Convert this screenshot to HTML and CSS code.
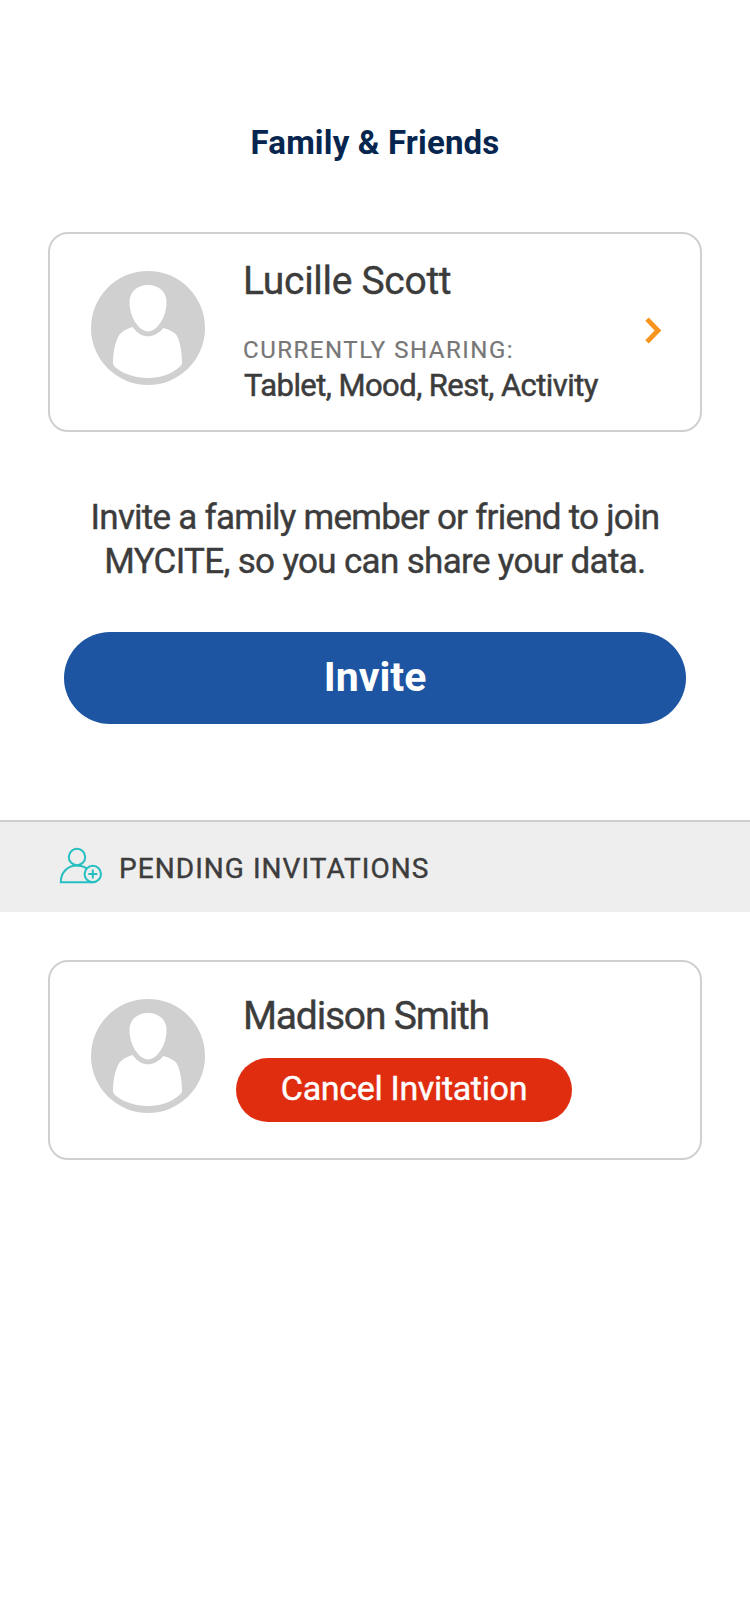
FILE: index.html
```
<!DOCTYPE html>
<html lang="en">
<head>
<meta charset="utf-8">
<title>Family &amp; Friends</title>
<link rel="stylesheet" href="styles.css">
</head>
<body>
<main class="screen">
  <h1 class="title">Family &amp; Friends</h1>

  <section class="card">
    <svg class="avatar" viewBox="0 0 114 114" aria-hidden="true">
      <circle cx="57" cy="57" r="57" fill="#d0d0d0"/>
      <path fill="#fff" d="M57 14C68 14 75.500 21 75.500 31C75.500 46 66 60.500 57 60.500C48 60.500 38.500 46 38.500 31C38.500 21 46 14 57 14Z"/>
      <path fill="#fff" d="M41.500 56C46 62 51 65.300 57 65.300C63 65.300 68 62 72.500 57C77 58 80.500 60 84 62.500C89 66.500 91 82 91 92Q91 94 89 95.500C80 103.500 69 107 57 107C45 107 33 103.500 24 96Q22 94 22 92C22 82 24 70 29 63C32 59.500 37 57.500 41.500 56Z"/>
    </svg>
    <div class="info">
      <h2 class="name name-lucille">Lucille Scott</h2>
      <p class="label">CURRENTLY SHARING:</p>
      <p class="shared">Tablet, Mood, Rest, Activity</p>
    </div>
    <svg class="chevron" viewBox="0 0 17 28" aria-hidden="true"><path d="M2 2.200L13 13.500L2 24.800" fill="none" stroke="#f7941d" stroke-width="4.800"/></svg>
  </section>

  <p class="prompt"><span class="prompt-first">Invite a family member or friend to join</span><br><span class="prompt-second">MYCITE, so you can share your data.</span></p>
  <button class="invite">Invite</button>

  <div class="section-bar">
    <svg class="person-add" viewBox="0 0 44 38" fill="none" stroke="#25bfc1" stroke-width="2" aria-hidden="true">
      <circle cx="18" cy="10" r="8.200"/>
      <path d="M34 35.200H1.800C1.800 25 9 18.600 18 18.600C21.500 18.600 25 19.500 28 21.300"/>
      <circle cx="33.800" cy="27" r="8.200"/>
      <path d="M33.800 22.500V31.500M29.300 27H38.300"/>
    </svg>
    <h2 class="section-title">PENDING INVITATIONS</h2>
  </div>

  <section class="card">
    <svg class="avatar" viewBox="0 0 114 114" aria-hidden="true">
      <circle cx="57" cy="57" r="57" fill="#d0d0d0"/>
      <path fill="#fff" d="M57 14C68 14 75.500 21 75.500 31C75.500 46 66 60.500 57 60.500C48 60.500 38.500 46 38.500 31C38.500 21 46 14 57 14Z"/>
      <path fill="#fff" d="M41.500 56C46 62 51 65.300 57 65.300C63 65.300 68 62 72.500 57C77 58 80.500 60 84 62.500C89 66.500 91 82 91 92Q91 94 89 95.500C80 103.500 69 107 57 107C45 107 33 103.500 24 96Q22 94 22 92C22 82 24 70 29 63C32 59.500 37 57.500 41.500 56Z"/>
    </svg>
    <div class="info info-pending">
      <h2 class="name name-madison">Madison Smith</h2>
      <button class="cancel">Cancel Invitation</button>
    </div>
  </section>
</main>
</body>
</html>
```
FILE: styles.css
```
* { box-sizing: border-box; margin: 0; }
body { background: #fff; color: #3c3c3c; font-family: Roboto, "Liberation Sans", sans-serif; }
.screen { display: flex; flex-direction: column; min-height: 1624px; padding-top: 121px; }
.title { color: #06264f; font-size: 33px; font-weight: 700; line-height: 44px; letter-spacing: .15px; text-align: center; }
.card { display: flex; height: 200px; margin: 0 48px; padding: 0 38px 0 41px; border: 2px solid #d0d0d0; border-radius: 20px; }
.title + .card { margin-top: 67px; }
.avatar { flex: none; width: 114px; height: 114px; margin-top: 37px; }
.info { flex: 1; padding: 25px 0 0 38px; white-space: nowrap; }
.name { font-size: 39px; font-weight: 400; line-height: 44px; -webkit-text-stroke: .4px; }
.name-lucille { letter-spacing: -.3px; }
.name-madison { letter-spacing: -1.2px; }
.label { margin: 33px 0 0; color: #777; font-size: 24px; line-height: 28px; letter-spacing: 1.52px; -webkit-text-stroke: .2px; }
.shared { margin: 4px 0 0 1px; font-size: 31px; line-height: 36px; letter-spacing: -.56px; -webkit-text-stroke: .5px; }
.chevron { flex: none; width: 17px; height: 28px; margin-top: 83px; }
.prompt { margin-top: 64px; font-size: 35px; line-height: 44px; text-align: center; -webkit-text-stroke: .4px; }
.prompt-first { letter-spacing: -.75px; }
.prompt-second { letter-spacing: -.67px; }
button { border: 0; color: #fff; font-family: inherit; }
.invite { height: 92px; margin: 48px 64px 0; padding: 0 0 3px; border-radius: 46px; background: #1e55a3; font-size: 41px; font-weight: 700; }
.section-bar { display: flex; align-items: center; gap: 16px; height: 92px; margin: 96px 0 48px; padding-left: 59px; border-top: 2px solid #cfcfcf; background: #eee; }
.person-add { width: 44px; height: 38px; margin-top: -2px; }
.section-title { padding-top: 3px; font-size: 28px; font-weight: 400; line-height: 34px; letter-spacing: 1.05px; -webkit-text-stroke: .4px; }
.info-pending { padding-top: 32px; }
.cancel { display: block; width: 336px; height: 64px; margin: 20px 0 0 -7px; padding: 0 0 5px; border-radius: 32px; background: #e02d10; font-size: 34px; letter-spacing: -.33px; -webkit-text-stroke: .4px; }
```
